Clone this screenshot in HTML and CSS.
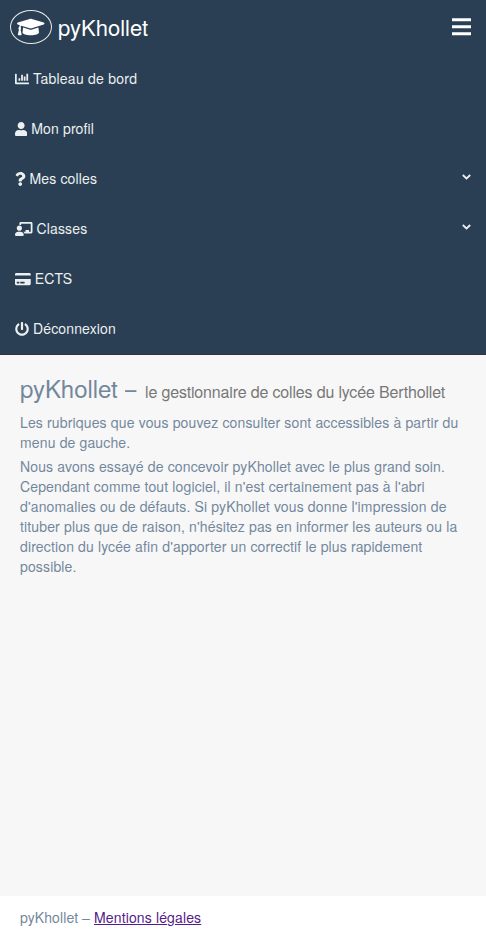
FILE: index.html
```html
<!DOCTYPE html>
<html lang="fr">
<head>
<meta charset="utf-8">
<title>pyKhollet</title>
<link rel="stylesheet" href="styles.css">
</head>
<body>
<nav class="sidebar">
  <div class="topbar">
    <a class="brand">
      <span class="logo"><svg width="27.5" height="22" viewBox="0 0 640 512"><path d="M622.34 153.2L343.4 67.5c-15.2-4.67-31.6-4.67-46.79 0L17.66 153.2c-23.54 7.23-23.54 38.36 0 45.59l48.63 14.94c-10.67 13.19-17.23 29.28-17.88 46.9C38.78 266.15 32 276.11 32 288c0 10.78 5.68 19.85 13.86 25.65L20.33 428.53C18.11 438.52 25.71 448 35.94 448h56.11c10.24 0 17.84-9.48 15.62-19.47L82.14 313.65C90.32 307.85 96 298.78 96 288c0-11.57-6.47-21.25-15.66-26.87.76-15.02 8.44-28.3 20.69-36.72L296.6 284.5c9.06 2.78 26.44 6.25 46.79 0l278.95-85.7c23.55-7.24 23.55-38.36 0-45.6zM352.79 315.09c-28.53 8.76-52.84 3.92-65.59 0l-145.02-44.55L128 384c0 35.35 85.96 64 192 64s192-28.65 192-64l-14.18-113.47-145.03 44.56z"/></svg></span>
      <span>pyKhollet</span>
    </a>
    <svg class="burger" width="20" height="22" viewBox="0 0 20 22"><path d="M1 2.200h19v3H1zM1 9.200h19v3H1zM1 16.200h19v3H1z"/></svg>
  </div>
  <ul class="menu">
    <li><svg width="14" height="14" viewBox="0 0 512 512"><path d="M332.8 320h38.4c6.4 0 12.8-6.4 12.8-12.8V172.8c0-6.4-6.4-12.8-12.8-12.8h-38.4c-6.4 0-12.8 6.4-12.8 12.8v134.4c0 6.4 6.4 12.8 12.8 12.8zm96 0h38.4c6.4 0 12.8-6.4 12.8-12.8V76.8c0-6.4-6.4-12.8-12.8-12.8h-38.4c-6.4 0-12.8 6.4-12.8 12.8v230.4c0 6.4 6.4 12.8 12.8 12.8zm-288 0h38.4c6.4 0 12.8-6.4 12.8-12.8v-70.4c0-6.4-6.4-12.8-12.8-12.8h-38.4c-6.4 0-12.8 6.4-12.8 12.8v70.4c0 6.4 6.4 12.8 12.8 12.8zm96 0h38.4c6.4 0 12.8-6.4 12.8-12.8V108.8c0-6.4-6.4-12.8-12.8-12.8h-38.4c-6.4 0-12.8 6.4-12.8 12.8v198.4c0 6.4 6.4 12.8 12.8 12.8zM496 384H64V80c0-8.84-7.16-16-16-16H16C7.16 64 0 71.16 0 80v336c0 17.67 14.33 32 32 32h464c8.84 0 16-7.16 16-16v-32c0-8.84-7.16-16-16-16z"/></svg> <span class="wide">Tableau de bord</span></li>
    <li><svg width="12.25" height="14" viewBox="0 0 448 512"><path d="M224 256c70.7 0 128-57.3 128-128S294.7 0 224 0 96 57.3 96 128s57.3 128 128 128zm89.6 32h-16.7c-22.2 10.2-46.9 16-72.9 16s-50.6-5.8-72.9-16h-16.7C60.2 288 0 348.2 0 422.4V464c0 26.5 21.5 48 48 48h352c26.5 0 48-21.5 48-48v-41.6c0-74.2-60.2-134.4-134.4-134.4z"/></svg> <span>Mon profil</span></li>
    <li><svg width="10.5" height="14" viewBox="0 0 384 512"><path d="M202.021 0C122.202 0 70.503 32.703 29.914 91.026c-7.363 10.58-5.093 25.086 5.178 32.874l43.138 32.709c10.373 7.865 25.132 6.026 33.253-4.148 25.049-31.381 43.63-49.449 82.757-49.449 30.764 0 68.816 19.799 68.816 49.631 0 22.552-18.617 34.134-48.993 51.164-35.423 19.86-82.299 44.576-82.299 106.405V320c0 13.255 10.745 24 24 24h72.471c13.255 0 24-10.745 24-24v-5.773c0-42.86 125.268-44.645 125.268-160.627C377.504 66.256 286.902 0 202.021 0zM192 373.459c-38.196 0-69.271 31.075-69.271 69.271 0 38.195 31.075 69.27 69.271 69.27s69.271-31.075 69.271-69.271-31.075-69.27-69.271-69.27z"/></svg> <span>Mes colles</span><svg class="chevron" width="9" height="6" viewBox="0 0 9 6"><path d="M.8 1l3.7 3.5L8.2 1"/></svg></li>
    <li><svg width="17.5" height="14" viewBox="0 0 640 512"><path d="M208 352c-2.39 0-4.78.35-7.06 1.09C187.98 357.3 174.35 360 160 360c-14.35 0-27.98-2.7-40.95-6.91-2.28-.74-4.66-1.09-7.05-1.09C49.94 352-.33 402.48 0 464.62.14 490.88 21.73 512 48 512h224c26.27 0 47.86-21.12 48-47.38.33-62.14-49.94-112.62-112-112.62zm-48-32c53.02 0 96-42.98 96-96s-42.98-96-96-96-96 42.98-96 96 42.98 96 96 96zM592 0H208c-26.47 0-48 22.25-48 49.59V96c23.42 0 45.1 6.78 64 17.8V64h352v288h-64v-64H384v64h-76.24c19.1 16.69 33.12 38.73 39.69 64H592c26.47 0 48-22.25 48-49.59V49.59C640 22.25 618.47 0 592 0z"/></svg> <span>Classes</span><svg class="chevron" width="9" height="6" viewBox="0 0 9 6"><path d="M.8 1l3.7 3.5L8.2 1"/></svg></li>
    <li><svg width="15.75" height="14" viewBox="0 0 576 512"><path d="M0 432c0 26.500 21.500 48 48 48h480c26.500 0 48-21.500 48-48V256H0v176zm192-68c0-6.600 5.400-12 12-12h136c6.600 0 12 5.400 12 12v40c0 6.600-5.400 12-12 12H204c-6.600 0-12-5.400-12-12v-40zm-128 0c0-6.600 5.400-12 12-12h72c6.600 0 12 5.400 12 12v40c0 6.600-5.400 12-12 12H76c-6.600 0-12-5.400-12-12v-40zM576 80v48H0V80c0-26.500 21.500-48 48-48h480c26.500 0 48 21.500 48 48z"/></svg> <span>ECTS</span></li>
    <li><svg width="14" height="14" viewBox="0 0 512 512"><path d="M400 54.100c63 45 104 118.600 104 201.900 0 136.800-110.800 247.700-247.500 248C120 504.300 8.200 393 8 256.400 7.900 173.100 48.900 99.300 111.800 54.200c11.700-8.300 28-4.800 35 7.700L162.600 90c5.900 10.500 3.100 23.800-6.600 31-41.500 30.800-68 79.600-68 134.900-.1 92.300 74.500 168.100 168 168.100 91.600 0 168.600-74.200 168-169.100-.3-51.800-24.700-101.800-68.100-134-9.700-7.200-12.400-20.500-6.500-30.900l15.800-28.100c7-12.400 23.200-16.100 34.800-7.800zM296 264V24c0-13.300-10.700-24-24-24h-32c-13.300 0-24 10.700-24 24v240c0 13.300 10.700 24 24 24h32c13.300 0 24-10.700 24-24z"/></svg> <span>Déconnexion</span></li>
  </ul>
</nav>
<main class="content">
  <h1>pyKhollet <span class="dash">–</span> <small>le gestionnaire de colles du lycée Berthollet</small></h1>
  <p>Les rubriques que vous pouvez consulter sont accessibles à partir du menu de gauche.</p>
  <p>Nous avons essayé de concevoir pyKhollet avec le plus grand soin. Cependant comme tout logiciel, il n'est certainement pas à l'abri d'anomalies ou de défauts. Si pyKhollet vous donne l'impression de tituber plus que de raison, n'hésitez pas en informer les auteurs ou la direction du lycée afin d'apporter un correctif le plus rapidement possible.</p>
</main>
<footer class="footer">pyKhollet – <a>Mentions légales</a></footer>
</body>
</html>
```
FILE: styles.css
```css
* { box-sizing: border-box; }
body {
  margin: 0;
  height: 936px;
  display: flex;
  flex-direction: column;
  background: #fff;
  color: #73879c;
  font: 14px/20px "Nimbus Sans", "TeX Gyre Heros", Helvetica, "Liberation Sans", sans-serif;
  letter-spacing: 0.145px;
}
.sidebar {
  height: 355px;
  background: #2a3f54;
  border-bottom: 1px solid #35333f;
  color: #ecf0f1;
}
svg { fill: currentColor; }
.topbar {
  height: 54px;
  padding: 0 15px 0 10px;
  display: flex;
  align-items: center;
  justify-content: space-between;
}
.brand {
  display: flex;
  align-items: center;
  gap: 6px;
  font-size: 22px;
  line-height: 32px;
  color: #fff;
}
.brand > span:last-child { padding-bottom: 1px; }
.logo {
  width: 42px;
  height: 34px;
  border: 1px solid #eaeaea;
  border-radius: 50%;
  display: flex;
  align-items: center;
  justify-content: center;
  letter-spacing: 0;
}
.brand { letter-spacing: 0.02px; }
.burger { color: #fff; }
.menu { margin: 0; padding: 0; list-style: none; }
.menu li {
  height: 50px;
  padding: 0 15px;
  display: flex;
  align-items: center;
  gap: 4px;
}
.menu span { padding-bottom: 2px; }
.menu .wide { letter-spacing: 0.25px; }
.menu .chevron {
  margin: 0 0 4px auto;
  fill: none;
  stroke: currentColor;
  stroke-width: 1.8;
}
.content {
  flex: 1;
  padding: 18px 20px 0;
  background: #f7f7f7;
}
h1 {
  margin: 0 0 5px;
  font-size: 24px;
  line-height: 30px;
  font-weight: 400;
  letter-spacing: -0.04px;
  white-space: nowrap;
}
h1 .dash {
  display: inline-block;
  width: 14px;
  transform: scaleX(0.85);
}
h1 small {
  font-size: 16px;
  letter-spacing: -0.16px;
  color: #777;
}
p { margin: 0 0 4px; }
.footer { height: 40px; padding: 11px 20px; letter-spacing: 0.1px; }
.footer a { color: #551a8b; text-decoration: underline; letter-spacing: 0.14px; }
```
